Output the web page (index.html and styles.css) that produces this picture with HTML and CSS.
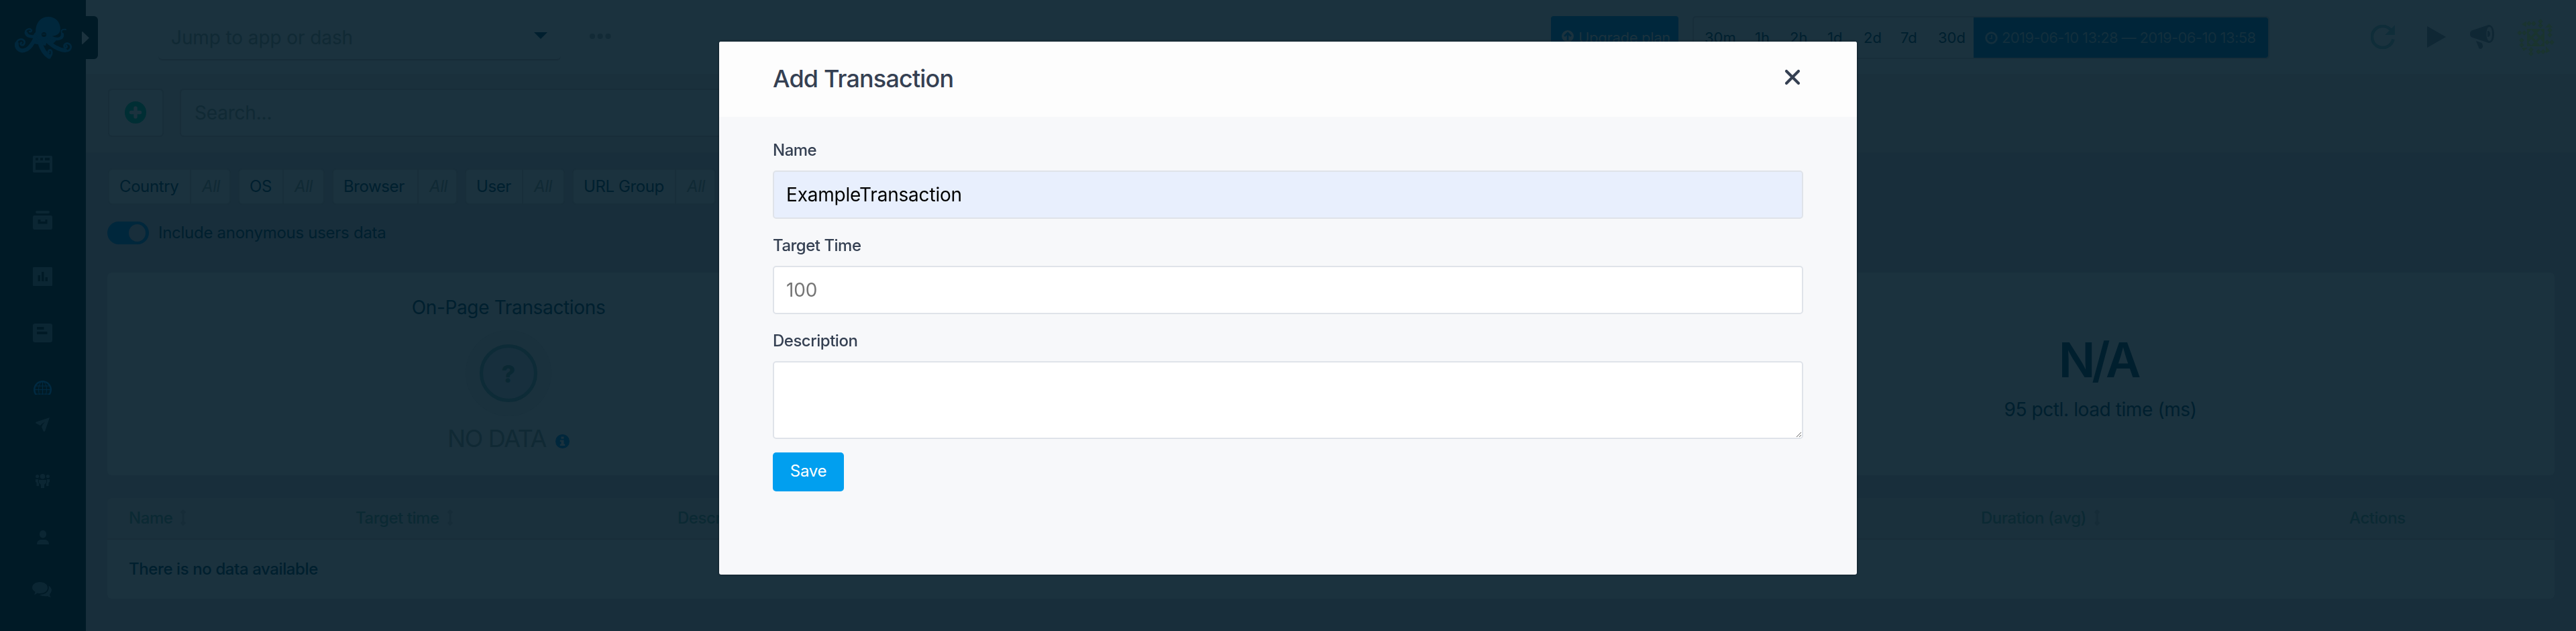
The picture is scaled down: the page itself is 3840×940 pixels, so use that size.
FILE: index.html
```html
<!DOCTYPE html>
<html lang="en">
<head>
<meta charset="utf-8">
<title>Transactions</title>
<link rel="stylesheet" href="styles.css">
</head>
<body>
<div class="app">
  <aside class="sidebar">
    <svg class="logo" viewBox="22 25 86 64" width="86" height="64">
      <path fill="currentColor" d="M53 48C53 33 61 25 72 25S90 33 90 43C90 49 86 53 77 54L84 60 78 66 70 61 68 68 56 66 46 64 49 57Q49 51 53 48Z"/>
      <g fill="none" stroke="currentColor" stroke-linecap="round">
        <path d="M53 58C48 64 45 73 36 75C28 77 24 70 25 65" stroke-width="6"/>
        <path d="M24.500 67C24 60 30 57 34 59C39 62 36 68 32 67Q29 65 32 63.500" stroke-width="2.800"/>
        <path d="M53 54C46 55 40 54 39 49" stroke-width="4.500"/>
        <path d="M38 50C37 44 44 41 47 45Q47 48 44 47" stroke-width="2.500"/>
        <path d="M59 62C62 72 66 80 73 84" stroke-width="7"/>
        <path d="M73 85C79 82 78 72 73 75Q71 77 73 78" stroke-width="3"/>
        <path d="M69 60C78 68 86 74 97 75" stroke-width="6"/>
        <path d="M96 76C105 77 108 70 104 66C98 62 93 68 97 71Q101 71 99 68" stroke-width="2.800"/>
        <path d="M77 56C84 60 94 58 93 51" stroke-width="4.500"/>
        <path d="M93.500 52C90 47 91 43 98 44" stroke-width="2"/>
      </g>
      <circle cx="65.500" cy="51.500" r="3.500" fill="#001a26"/><path d="M63 51h5" stroke="currentColor"/>
    </svg>
    <nav class="nav">
      <svg class="n1" viewBox="0 0 29 25" width="29" height="25"><path fill="currentColor" fill-rule="evenodd" d="M1.500 0h26a1.500 1.500 0 0 1 1.500 1.500v22a1.500 1.500 0 0 1-1.500 1.500h-26A1.500 1.500 0 0 1 0 23.500v-22A1.500 1.500 0 0 1 1.500 0ZM4 3v4h4V3Zm7 0v4h4V3Zm7 0v4h7V3ZM4 10.500V21h21V10.500Z"/></svg>
      <svg class="n2" viewBox="0 0 29 29" width="29" height="29"><path fill="currentColor" fill-rule="evenodd" d="M6 0h17a2 2 0 0 1 0 4H6a2 2 0 0 1 0-4ZM2 7h25a2 2 0 0 1 2 2v17a2 2 0 0 1-2 2H2a2 2 0 0 1-2-2V9a2 2 0 0 1 2-2Zm5.500 6v6.500h14V13h-3v3h-7v-3Z"/></svg>
      <svg class="n3" viewBox="0 0 29 28" width="29" height="28"><path fill="currentColor" fill-rule="evenodd" d="M1 0h27a1 1 0 0 1 1 1v26a1 1 0 0 1-1 1H1a1 1 0 0 1-1-1V1a1 1 0 0 1 1-1ZM7.500 12v9H11v-9Zm5.500-5v14h3.500V7Zm5.500 8v6H22v-6Z"/></svg>
      <svg class="n4" viewBox="0 0 29 28" width="29" height="28"><path fill="currentColor" fill-rule="evenodd" d="M3 0h23a3 3 0 0 1 3 3v22a3 3 0 0 1-3 3H3a3 3 0 0 1-3-3V3a3 3 0 0 1 3-3ZM6 5v4h10.500V5Zm0 7v4h15.500v-4Z"/></svg>
      <svg class="n5 active" viewBox="0 0 27 21" width="27" height="21"><g fill="none" stroke="currentColor"><circle cx="13.500" cy="13.500" r="12.300" stroke-width="2.500"/><ellipse cx="13.500" cy="13.500" rx="6" ry="12" /><path d="M13.500 1v20M2 8h23M1 13.500h25M2 20h23" stroke-width="1.200"/></g></svg>
      <svg class="n6" viewBox="0 0 21 21" width="21" height="21"><path fill="currentColor" d="M21 0 14 20.500Q12.500 21.500 11.500 20L9 14Q10 10 14 6.500Q9 9 7 12L.500 8.500Q-.500 7.500 1 6.500Z"/></svg>
      <svg class="n7" viewBox="0 0 21 21" width="21" height="21"><g fill="currentColor"><circle cx="2.600" cy="3.500" r="2.600"/><circle cx="18.400" cy="3.500" r="2.600"/><circle cx="10.500" cy="3.700" r="3.800"/><path d="M0 8h4v5l1 1v4H1.500v-5L0 12ZM21 8h-4v5l-1 1v4h3.500v-5L21 12ZM5 9h11v4l-3 3v5H8v-5l-3-3Z"/></g></svg>
      <svg class="n8" viewBox="0 0 18 21" width="18" height="21"><g fill="currentColor"><rect x="4" y="0" width="10" height="11.500" rx="5"/><path d="M0 21C0 16 3 14 6 14h6c3 0 6 2 6 7Z"/></g></svg>
      <svg class="n9" viewBox="0 0 29 23" width="29" height="23"><g fill="currentColor"><path d="M11.500 0C18 0 23 3.500 23 8.500S18 17 11.500 17q-2 0-4-.6Q5.500 19 2.500 18.800 4.500 17 4.500 14.800 0 12 0 8.500C0 3.500 5 0 11.500 0Z"/><path d="M24.500 5.500Q29 8.500 29 12.500 28.500 16 26 18q0 3 2 4.500-3 .5-5-1.500-7 1-12.500-2 12-.5 14-8 .5-3 0-5.500Z"/></g></svg>
    </nav>
    <div class="drawer-tab"><svg viewBox="0 0 11 19" width="11" height="19"><path fill="currentColor" d="M0 1Q0-.500 1.500.500L10.500 9Q11 9.500 10.500 10L1.500 18.500Q0 19.500 0 18Z"/></svg></div>
  </aside>

  <main class="main">
    <header class="topbar">
      <div class="jump"><span class="t28">Jump to app or dash</span><svg viewBox="0 0 20 10" width="20" height="10"><path fill="currentColor" d="M0 0h20L10 10Z"/></svg></div>
      <svg class="more" viewBox="0 0 32 8" width="32" height="8"><g fill="currentColor"><circle cx="4" cy="4" r="4"/><circle cx="15.700" cy="4" r="4"/><circle cx="27.500" cy="4" r="4"/></g></svg>
      <div class="upgrade"><svg viewBox="0 0 18 18" width="18" height="18"><circle cx="9" cy="9" r="9" fill="currentColor"/><path d="M9 15V4.500M4 9l5-5 5 5" fill="none" stroke="#00273c" stroke-width="2.600"/></svg><span class="up-label">Upgrade plan</span></div>
      <div class="range">
        <span class="r0">30m</span><span class="r1">1h</span><span class="r2">2h</span><span class="r3">1d</span><span class="r4">2d</span><span class="r5">7d</span><span class="r6">30d</span>
        <div class="dates"><svg viewBox="0 0 19 19" width="19" height="19"><circle cx="9.500" cy="9.500" r="7.800" fill="none" stroke="currentColor" stroke-width="3"/><path d="M10 5v5.500H6.500" fill="none" stroke="currentColor" stroke-width="1.700"/></svg><span class="date-label">2019-06-10 13:28 — 2019-06-10 13:58</span></div>
      </div>
      <svg class="refresh" viewBox="0 0 36 36" width="36" height="36"><path d="M33.500 21.500A16 16 0 1 1 29.500 7" fill="none" stroke="currentColor" stroke-width="4.500"/><path fill="currentColor" d="M36 .500V15H21.500Z"/></svg>
      <svg class="play" viewBox="0 0 28 32" width="28" height="32"><path fill="currentColor" d="M0 0 28 16 0 32Z"/></svg>
      <svg class="horn" viewBox="0 0 36 36" width="36" height="36"><path fill="currentColor" fill-rule="evenodd" d="M28 0C32 0 36 5 36 13.500S33 27 28 27L4 19Q0 18 0 13.500T4 8ZM29 3C26 3 24.500 8 24.500 13.500S26 24 29 24 33 19 33 13.500 32 3 29 3Z"/><path fill="currentColor" d="M26 9q4 0 4 4.500T26 18ZM9 24l8.500 3q2 3 1.500 6-1.500 4-5.500 2Z"/></svg>
      <svg class="avatar" viewBox="0 0 56 56" width="56" height="56">
        <defs><path id="d" d="M0-3.700 3.700 0 0 3.700-3.700 0Z"/></defs>
        <g fill="currentColor">
          <path d="M7 8l7-4v8ZM42 13l6-6 5 6ZM49 48l-6-7v10ZM7 43h9l-6 5Z"/>
          <use href="#d" x="18" y="7"/><use href="#d" x="25" y="7"/><use href="#d" x="35" y="4"/><use href="#d" x="35" y="10"/><use href="#d" x="49" y="17"/><use href="#d" x="49" y="24"/><use href="#d" x="4" y="21"/><use href="#d" x="11" y="21"/><use href="#d" x="7" y="32"/><use href="#d" x="7" y="39"/><use href="#d" x="45" y="35"/><use href="#d" x="52" y="35"/><use href="#d" x="21" y="46"/><use href="#d" x="21" y="52"/><use href="#d" x="32" y="49"/><use href="#d" x="39" y="49"/>
          <path fill-rule="evenodd" d="M15 15h26v26H15ZM21 16l-4 5 4 5 5-5ZM35 16l-5 5 5 5 4-5ZM21 30l-4 5 4 5 5-5ZM35 30l-5 5 5 5 4-5ZM28 24l-4 4 4 4 4-4Z"/>
        </g>
      </svg>
    </header>

    <section class="searchbar">
      <div class="add"><svg viewBox="0 0 32 33" width="32" height="33"><ellipse cx="16" cy="16.500" rx="16" ry="16.500" fill="currentColor"/><path d="M16 10v13M9.500 16.500h13" stroke="#1b323e" stroke-width="5.500" stroke-linecap="round"/></svg></div>
      <div class="search"><span class="search-label">Search...</span></div>
    </section>

    <section class="filters">
      <div class="chip c1"><span class="key">Country</span><span class="val">All</span></div>
      <div class="chip c2"><span class="key">OS</span><span class="val">All</span></div>
      <div class="chip c3"><span class="key">Browser</span><span class="val">All</span></div>
      <div class="chip c4"><span class="key">User</span><span class="val">All</span></div>
      <div class="chip c5"><span class="key">URL Group</span><span class="val">All</span></div>
    </section>
    <div class="anon"><span class="toggle"><span class="knob"></span></span><span class="anon-label">Include anonymous users data</span></div>

    <section class="card metrics">
      <div class="metric first">
        <h2 class="metric-title">On-Page Transactions</h2>
        <div class="halo"><div class="ring">?</div></div>
        <div class="nodata"><span>NO DATA</span><svg viewBox="0 0 21 21" width="21" height="21"><circle cx="10.500" cy="10.500" r="10.500" fill="#00273c"/><path fill="#1b323e" d="M8.500 3.500h4v3.300h-4ZM6.800 8.500h5.700v6h1.700V17H6.800v-2.500h1.700V11H6.800Z"/></svg></div>
      </div>
      <div class="metric"></div>
      <div class="metric last"><div class="big">N/A</div><div class="caption">95 pctl. load time (ms)</div></div>
    </section>

    <section class="card table">
      <div class="thead">
        <div class="th">Name<svg class="sort" viewBox="0 0 10 24" width="10" height="24"><path d="M5 3v18M2 5l3-3 3 3M2 19l3 3 3-3" fill="none" stroke="currentColor" stroke-width="3"/></svg></div>
        <div class="th">Target time<svg class="sort" viewBox="0 0 10 24" width="10" height="24"><path d="M5 3v18M2 5l3-3 3 3M2 19l3 3 3-3" fill="none" stroke="currentColor" stroke-width="3"/></svg></div>
        <div class="th">Description</div>
        <div class="th">Duration (avg)<svg class="sort" viewBox="0 0 10 24" width="10" height="24"><path d="M5 3v18M2 5l3-3 3 3M2 19l3 3 3-3" fill="none" stroke="currentColor" stroke-width="3"/></svg></div>
        <div class="th">Actions</div>
      </div>
      <div class="empty">There is no data available</div>
    </section>
  </main>
</div>

<div class="overlay">
  <div class="modal" role="dialog">
    <div class="modal-head">
      <h1 class="modal-title">Add Transaction</h1>
      <svg class="close" viewBox="0 0 24 24" width="24" height="24"><path d="M3 3 21 21M21 3 3 21" stroke="currentColor" stroke-width="4.200" stroke-linecap="round"/></svg>
    </div>
    <form class="form">
      <label class="label" for="name">Name</label>
      <input class="input filled" id="name" value="ExampleTransaction">
      <label class="label" for="time">Target Time</label>
      <input class="input" id="time" placeholder="100">
      <label class="label" for="desc">Description</label>
      <textarea class="input area" id="desc"></textarea>
      <button class="save" type="button">Save</button>
    </form>
  </div>
</div>
</body>
</html>
```
FILE: styles.css
```css
* { box-sizing: border-box; }
body { margin: 0; background: #182e3b; font-family: Inter, "Liberation Sans", sans-serif; color: #001f2e; height: 940px; overflow: hidden; }
svg { display: block; flex: none; }
h1, h2 { margin: 0; font-weight: 400; }
.app { display: flex; height: 940px; }

.sidebar { position: relative; width: 128px; flex: none; background: #001a26; padding-top: 25px; }
.logo { margin-left: 22px; color: #00273c; }
.nav { display: flex; flex-direction: column; align-items: center; padding: 143px 2px 0 0; color: #0b2633; }
.n2 { margin-top: 57px; }
.n3 { margin-top: 55px; }
.n4 { margin-top: 56px; }
.n5 { margin-top: 57px; }
.n6 { margin-top: 34px; }
.n7 { margin-top: 63px; }
.n8 { margin-top: 63px; margin-left: 1px; }
.n9 { margin-top: 56px; margin-right: 1px; }
.active { color: #002a42; }
.drawer-tab { position: absolute; left: 118px; top: 24px; width: 28px; height: 64px; padding: 23px 0 0 4px; background: #001a26; border-radius: 0 6px 6px 0; color: #1b323e; }

.main { flex: 1; min-width: 0; }
.topbar { display: flex; align-items: flex-start; height: 110px; background: #1b323e; }
.topbar > * { flex: none; }
.jump { display: flex; justify-content: space-between; align-items: flex-start; width: 600px; height: 66px; margin: 24px 0 0 108px; padding: 24px 20px 0 19px; border-bottom: 2px solid #172c38; border-radius: 6px; color: #001f2e; }
.t28 { font-size: 28px; line-height: 34px; margin-top: -9px; color: #102934; letter-spacing: -.1px; white-space: nowrap; }
.more { margin: 50px 0 0 43px; color: #122a36; }
.upgrade { display: flex; width: 190px; height: 64px; margin: 24px 0 0 1401px; padding: 0 0 0 16px; align-items: flex-start; background: #00273c; border-radius: 4px; color: #1b323e; }
.upgrade svg { margin-top: 21px; }
.up-label { margin: 17px 0 0 7px; font-size: 22px; line-height: 30px; letter-spacing: -.3px; white-space: nowrap; }
.range { display: flex; width: 860px; height: 64px; margin: 24px 0 0 21px; border: 2px solid #182e3a; border-radius: 5px; font-size: 22px; line-height: 60px; white-space: nowrap; }
.range > span { flex: none; }
.r0 { width: 75px; margin-left: 16px; }
.r1 { width: 52px; }
.r2 { width: 56px; }
.r3 { width: 54px; }
.r4 { width: 55px; }
.r5 { width: 56px; }
.r6 { width: 53px; }
.dates { display: flex; flex: 1; min-width: 0; padding-left: 17px; background: #002539; border-radius: 0 4px 4px 0; color: #132f3d; }
.dates svg { margin-top: 21px; }
.date-label { margin-left: 6px; letter-spacing: -.6px; }
.refresh { margin: 37px 0 0 151px; color: #0f2d39; }
.play { margin: 39px 0 0 48px; color: #0f2734; }
.horn { margin: 37px 0 0 36px; color: #0f2734; }
.avatar { margin: 28px 0 0 34px; color: #1a342f; }

.searchbar { display: flex; height: 117px; padding: 22px 0 0 33px; background: #1a303c; }
.add { width: 83px; height: 72px; padding: 17px 0 0 23px; border: 2px solid #182d39; border-radius: 6px; background: #1b323e; color: #002e34; }
.search { width: 1232px; height: 72px; margin-left: 24px; padding: 17px 0 0 20px; border: 2px solid #182d39; border-radius: 6px; background: #1b323e; }
.search-label { display: block; font-size: 28px; line-height: 35px; letter-spacing: -.2px; color: #102934; }

.filters { display: flex; padding: 24px 0 0 33px; gap: 11px; }
.chip { display: flex; flex: none; height: 54px; border: 2px solid #182e3a; border-radius: 6px; background: #1b323e; font-size: 24px; letter-spacing: -.4px; line-height: 49px; white-space: nowrap; }
.key { padding-left: 15px; border-right: 2px solid #182e3a; }
.val { padding-left: 16px; font-style: italic; color: #102934; }
.c1 { width: 183px; } .c1 .key { width: 122px; }
.c2 { width: 129px; } .c2 .key { width: 66px; }
.c3 { width: 187px; } .c3 .key { width: 127px; }
.c4 { width: 149px; } .c4 .key { width: 85px; }
.c5 { width: 214px; } .c5 .key { width: 153px; }
.anon { display: flex; align-items: center; height: 34px; margin: 25px 0 0 32px; }
.toggle { width: 62px; height: 34px; padding: 4px 5px 0 32px; border-radius: 17px; background: #00273c; }
.knob { display: block; width: 25px; height: 26px; border-radius: 13px; background: #182e3b; }
.anon-label { margin-left: 14px; font-size: 24px; line-height: 34px; letter-spacing: -.27px; }

.card { width: 3648px; margin-left: 32px; background: #1b323e; border-radius: 6px; }
.metrics { display: flex; height: 302px; margin-top: 42px; }
.metric { width: 1098px; text-align: center; }
.metric.first { width: 1196px; }
.metric.last { width: 1354px; padding-top: 87px; }
.metric-title { margin-top: 35px; font-size: 28px; line-height: 34px; letter-spacing: -.35px; }
.halo { display: flex; align-items: center; justify-content: center; width: 128px; height: 128px; margin: 17px auto 0; border-radius: 50%; background: #1a313d; }
.ring { width: 86px; height: 86px; border: 5px solid #0d2b37; border-radius: 50%; background: #172f3d; font-size: 36px; font-weight: 800; line-height: 78px; color: #0a2833; }
.nodata { display: flex; justify-content: center; margin-top: 11px; font-size: 36px; line-height: 44px; letter-spacing: -1.3px; color: #102934; }
.nodata svg { margin: 16px 0 0 14px; }
.big { padding-right: 7px; font-size: 72px; font-weight: 600; line-height: 86px; letter-spacing: -5px; }
.caption { margin-top: 14px; font-size: 28px; line-height: 34px; letter-spacing: -.4px; }

.table { height: 150px; margin-top: 34px; overflow: hidden; }
.thead { display: grid; grid-template-columns: 338px 480px 1943px 549px 1fr; height: 62px; padding-left: 32px; background: #1a303c; border-bottom: 2px solid #182d39; color: #0b2933; font-size: 24px; font-weight: 500; letter-spacing: -.45px; line-height: 59px; }
.th { display: flex; align-items: flex-start; white-space: nowrap; }
.sort { margin: 17px 0 0 11px; color: #162c38; }
.empty { padding-left: 32px; font-size: 24px; font-weight: 500; letter-spacing: -.4px; line-height: 88px; }

.overlay { position: fixed; inset: 0; padding-top: 62px; }
.modal { width: 1696px; height: 794px; margin: 0 auto; background: #f7f8fa; border-radius: 3px; box-shadow: 0 0 3px rgba(0, 10, 20, .7); overflow: hidden; }
.modal-head { display: flex; justify-content: space-between; height: 112px; padding: 33px 84px 0 80px; background: #fdfdfd; color: #354052; }
.modal-title { font-size: 36px; font-weight: 500; line-height: 44px; letter-spacing: -.85px; }
.close { margin-top: 8px; }
.form { display: flex; flex-direction: column; align-items: flex-start; padding: 34px 80px 0; }
.label { height: 46px; font-size: 24px; font-weight: 500; line-height: 32px; letter-spacing: -.5px; color: #354052; }
.input { width: 1536px; height: 72px; margin: 0 0 24px; padding: 0 18px; border: 2px solid #dfe3e9; border-radius: 5px; background: #fff; font: 400 28px/34px Inter, sans-serif; letter-spacing: -.2px; color: #000; outline: none; }
.input::placeholder { color: #757575; }
.filled { background: #e8effd; }
.area { height: 116px; margin-bottom: 20px; }
.save { width: 106px; height: 58px; padding: 0 0 2px; border: 0; border-radius: 5px; background: #019fef; color: #fff; font: 400 24px/30px Inter, sans-serif; letter-spacing: -.3px; }
```
